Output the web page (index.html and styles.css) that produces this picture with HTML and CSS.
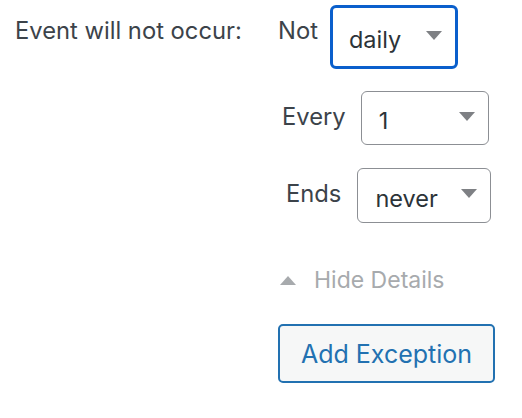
FILE: index.html
```html
<!DOCTYPE html>
<html>
<head>
<meta charset="utf-8">
<link rel="stylesheet" href="styles.css">
</head>
<body>
<div class="recurrence">
  <div class="label-col">Event will not occur:</div>
  <div class="fields">
    <div class="row row-not">
      <span class="lbl">Not</span>
      <div class="select sel-daily is-focused">
        <span class="val">daily</span>
        <svg class="arrow" width="16" height="9" viewBox="0 0 16 9"><polygon points="0,0 16,0 8,9" /></svg>
      </div>
    </div>
    <div class="row row-every">
      <span class="lbl">Every</span>
      <div class="select sel-every">
        <span class="val">1</span>
        <svg class="arrow" width="16" height="9" viewBox="0 0 16 9"><polygon points="0,0 16,0 8,9" /></svg>
      </div>
    </div>
    <div class="row row-ends">
      <span class="lbl">Ends</span>
      <div class="select sel-ends">
        <span class="val">never</span>
        <svg class="arrow" width="16" height="9" viewBox="0 0 16 9"><polygon points="0,0 16,0 8,9" /></svg>
      </div>
    </div>
    <div class="toggle">
      <svg class="toggle-icon" width="16" height="9" viewBox="0 0 16 9"><polygon points="8,0 16,9 0,9" /></svg>
      <span>Hide Details</span>
    </div>
    <button class="btn" type="button">Add Exception</button>
  </div>
</div>
</body>
</html>
```
FILE: styles.css
```css
html, body {
  margin: 0;
  padding: 0;
  background: #ffffff;
}
body {
  font-family: Inter, "Noto Sans", sans-serif;
  color: #3c434a;
  font-size: 23.75px;
  line-height: 28px;
}
.recurrence {
  display: flex;
  align-items: flex-start;
  padding: 5px 0 0 15px;
}
.label-col {
  width: 263px;
  flex: none;
  padding-top: 12px;
}
.fields {
  display: flex;
  flex-direction: column;
  align-items: flex-start;
}
.row {
  display: flex;
  align-items: flex-start;
}
.lbl {
  padding-top: 12px;
}
.row-not .lbl { margin-right: 12px; }
.row-every { margin: 22px 0 0 4px; }
.row-every .lbl { margin-right: 15px; }
.row-ends { margin: 23px 0 0 8px; }
.row-ends .lbl { margin-right: 16px; }
.select {
  box-sizing: border-box;
  display: flex;
  align-items: center;
  justify-content: space-between;
  border: 1.5px solid #8c8f94;
  border-radius: 6px;
  background: #fff;
  color: #2c3338;
  font-size: 23.5px;
  padding: 0 13px 0 17px;
}
.select .val {
  padding-top: 6px;
}
.arrow {
  fill: #7e8084;
  margin-top: -4px;
}
.sel-daily {
  width: 128px;
  height: 64px;
  padding-left: 16px;
}
.is-focused {
  border: 3px solid #0a5fcc;
}
.sel-every {
  width: 128px;
  height: 54px;
}
.sel-ends {
  width: 134px;
  height: 55px;
}
.toggle {
  display: flex;
  align-items: center;
  gap: 18px;
  margin: 43px 0 0 2px;
  color: #a7aaad;
  font-size: 23px;
}
.toggle-icon {
  fill: #a7aaad;
}
.btn {
  margin-top: 30px;
  box-sizing: border-box;
  width: 217px;
  height: 59px;
  border: 2px solid #2271b1;
  border-radius: 5px;
  background: #f6f7f7;
  color: #2271b1;
  font-family: Inter, "Noto Sans", sans-serif;
  font-size: 25px;
  padding: 0;
  cursor: pointer;
}
```
